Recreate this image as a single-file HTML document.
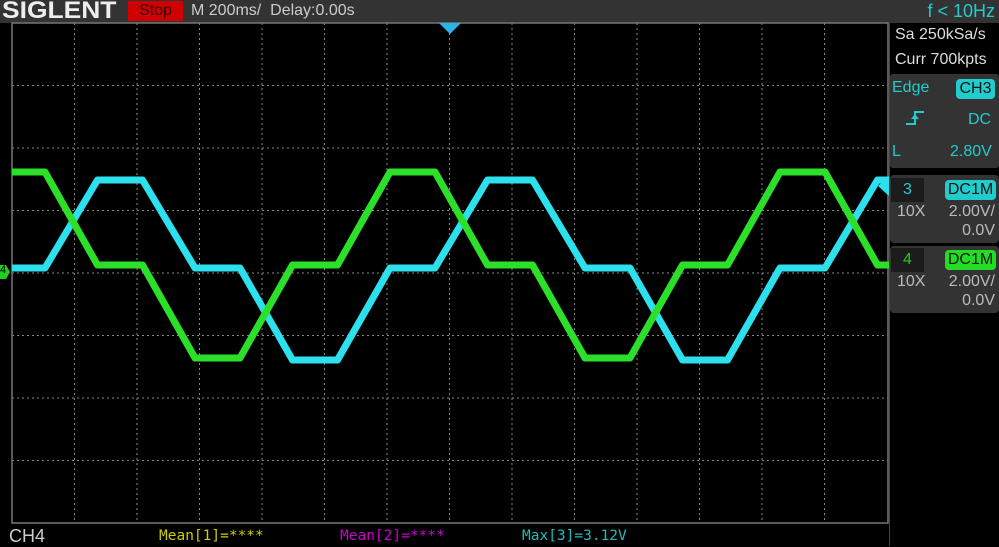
<!DOCTYPE html>
<html><head><meta charset="utf-8"><style>
body{margin:0;width:999px;height:546px;background:#000;overflow:hidden;font-family:"Liberation Sans",sans-serif;position:relative}
.a{position:absolute;white-space:nowrap}
</style></head><body>
<div class="a" style="left:0;top:0;width:999px;height:23px;background:#333"></div>
<div class="a" style="left:2px;top:-3px;font-size:24px;font-weight:bold;color:#eee;transform:scaleX(1.1);transform-origin:left">SIGLENT</div>
<div class="a" style="left:128px;top:1px;width:55px;height:20px;background:#d00000;color:#300;font-size:16px;line-height:20px;text-align:center">Stop</div>
<div class="a" style="left:191px;top:1px;font-size:16px;color:#ccc;line-height:20px">M 200ms/&nbsp; Delay:0.00s</div>
<div class="a" style="right:4px;top:0px;font-size:18px;color:#2cc;line-height:22px">f &lt; 10Hz</div>

<svg class="a" style="left:0;top:0" width="999" height="546">
<g stroke="#888" stroke-width="1" stroke-dasharray="2,3">
<line x1="74.5" y1="23" x2="74.5" y2="523"/><line x1="137" y1="23" x2="137" y2="523"/><line x1="199.5" y1="23" x2="199.5" y2="523"/><line x1="262" y1="23" x2="262" y2="523"/><line x1="324.5" y1="23" x2="324.5" y2="523"/><line x1="387" y1="23" x2="387" y2="523"/><line x1="449.5" y1="23" x2="449.5" y2="523"/><line x1="512" y1="23" x2="512" y2="523"/><line x1="574.5" y1="23" x2="574.5" y2="523"/><line x1="637" y1="23" x2="637" y2="523"/><line x1="699.5" y1="23" x2="699.5" y2="523"/><line x1="762" y1="23" x2="762" y2="523"/><line x1="824.5" y1="23" x2="824.5" y2="523"/>
<line x1="12" y1="85.5" x2="888" y2="85.5"/><line x1="12" y1="148" x2="888" y2="148"/><line x1="12" y1="210.5" x2="888" y2="210.5"/><line x1="12" y1="273" x2="888" y2="273"/><line x1="12" y1="335.5" x2="888" y2="335.5"/><line x1="12" y1="398" x2="888" y2="398"/><line x1="12" y1="460.5" x2="888" y2="460.5"/>
</g>
<rect x="12" y="23" width="876" height="500" fill="none" stroke="#777" stroke-width="1.5"/>
<polygon points="439,23 461,23 450,34" fill="#29b6e6"/>
<clipPath id="c"><rect x="12" y="23" width="877" height="500"/></clipPath>
<g clip-path="url(#c)" fill="none" stroke-linejoin="round">
<polyline stroke="#2ce0ee" stroke-width="7" points="-97.5,360 -52.5,360 0,268 45,268 97.5,180 142.5,180 195,268 240,268 292.5,360 337.5,360 390,268 435,268 487.5,180 532.5,180 585,268 630,268 682.5,360 727.5,360 780,268 825,268 877.5,180 922.5,180"/>
<polyline stroke="#2ce02a" stroke-width="7" points="0,172 45,172 97.5,265 142.5,265 195,358 240,358 292.5,265 337.5,265 390,172 435,172 487.5,265 532.5,265 585,358 630,358 682.5,265 727.5,265 780,172 825,172 877.5,265 922.5,265"/>
</g>
<polygon points="0,265 6,265 10,272 6,279 0,279" fill="#22cc22"/>
<polygon points="878,186 889,176 889,196" fill="#2ce0ee"/>
</svg>
<div class="a" style="left:0;top:264px;font-size:11px;color:#000">4</div>

<div class="a" style="left:889px;top:23px;width:110px;height:523px;background:#000;border-left:1px solid #444"></div>
<div class="a" style="left:895px;top:26px;font-size:16px;color:#ddd">Sa 250kSa/s</div>
<div class="a" style="left:895px;top:51px;font-size:16px;color:#ddd">Curr 700kpts</div>
<div class="a" style="left:890px;top:74px;width:109px;height:94px;background:#333;border-radius:3px"></div>
<div class="a" style="left:892px;top:79px;font-size:16px;color:#2cc">Edge</div>
<div class="a" style="left:956px;top:79px;width:39px;height:20px;background:#2cc;border-radius:4px;color:#111;font-size:16px;text-align:center;line-height:20px">CH3</div>
<svg class="a" style="left:904px;top:108px" width="24" height="20"><path d="M2 16H11V4H20" stroke="#2cc" stroke-width="2" fill="none"/><path d="M7 11L11 6L15 11Z" fill="#2cc"/></svg>
<div class="a" style="left:968px;top:111px;font-size:16px;color:#2cc">DC</div>
<div class="a" style="left:892px;top:143px;font-size:16px;color:#2cc">L</div>
<div class="a" style="left:950px;top:143px;font-size:16px;color:#2cc">2.80V</div>

<div class="a" style="left:890px;top:175px;width:109px;height:68px;background:#333;border-radius:4px"></div>
<div class="a" style="left:891px;top:178px;width:33px;height:24px;background:#1c1c1c;color:#2cc;font-size:16px;text-align:center;line-height:24px">3</div>
<div class="a" style="left:945px;top:180px;width:51px;height:20px;background:#2cc;border-radius:4px;color:#111;font-size:16px;text-align:center;line-height:20px">DC1M</div>
<div class="a" style="left:897px;top:203px;font-size:16px;color:#bbb">10X</div>
<div class="a" style="right:4px;top:203px;font-size:16px;color:#bbb">2.00V/</div>
<div class="a" style="right:4px;top:222px;font-size:16px;color:#bbb">0.0V</div>

<div class="a" style="left:890px;top:246px;width:109px;height:67px;background:#333;border-radius:4px"></div>
<div class="a" style="left:891px;top:248px;width:33px;height:24px;background:#1c1c1c;color:#2c2;font-size:16px;text-align:center;line-height:24px">4</div>
<div class="a" style="left:945px;top:250px;width:51px;height:20px;background:#2d2;border-radius:4px;color:#111;font-size:16px;text-align:center;line-height:20px">DC1M</div>
<div class="a" style="left:897px;top:273px;font-size:16px;color:#bbb">10X</div>
<div class="a" style="right:4px;top:273px;font-size:16px;color:#bbb">2.00V/</div>
<div class="a" style="right:4px;top:292px;font-size:16px;color:#bbb">0.0V</div>

<div class="a" style="left:9px;top:526px;font-size:18px;color:#ccc">CH4</div>
<div class="a" style="left:159px;top:528px;font-size:14.5px;color:#cc0;font-family:'DejaVu Sans Mono',monospace">Mean[1]=****</div>
<div class="a" style="left:340px;top:528px;font-size:14.5px;color:#c0c;font-family:'DejaVu Sans Mono',monospace">Mean[2]=****</div>
<div class="a" style="left:522px;top:528px;font-size:14.5px;color:#2bb;font-family:'DejaVu Sans Mono',monospace">Max[3]=3.12V</div>
</body></html>
